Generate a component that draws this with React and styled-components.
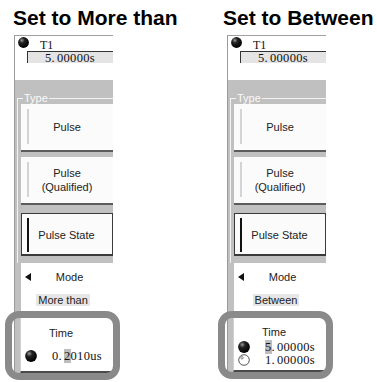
import React from 'react'
import styled, { createGlobalStyle } from 'styled-components'

const GlobalStyle = createGlobalStyle`
  body {
    margin: 0;
    background: #fff;
    font-family: "Liberation Sans", Arial, sans-serif;
  }
`

const Page = styled.div`
  display: flex;
  width: 377px;
  height: 382px;
  overflow: hidden;
`

const Column = styled.div`
  width: ${({ $w }) => $w}px;
  flex-shrink: 0;
  display: flex;
  flex-direction: column;
`

const Title = styled.h2`
  margin: 6px 0 5px ${({ $indent }) => $indent}px;
  font: bold 21px/24px "Liberation Sans", Arial, sans-serif;
  color: #000;
  white-space: nowrap;
`

const Panel = styled.div`
  margin-left: 14px;
  width: 99px;
  box-sizing: border-box;
  border-left: 1px solid #9a9a9a;
  background: #c0c0c0;
  display: flex;
  flex-direction: column;
`

const TopSection = styled.div`
  height: 45px;
  box-sizing: border-box;
  background: #fff;
  border-top: 1px solid #a0a0a0;
  display: flex;
  flex-direction: column;
`

const HeaderRow = styled.div`
  height: 15px;
  display: flex;
  align-items: flex-end;
  padding-left: 3px;
`

const BallSlot = styled.span`
  align-self: flex-start;
  margin-top: 1px;
  display: flex;
`

const Label = styled.span`
  margin-left: 11px;
  font: 12px/12px "Liberation Serif", "Times New Roman", serif;
  color: #111;
`

const InputBox = styled.div`
  margin-left: 12px;
  height: 11px;
  border-top: 1px solid #333;
  border-left: 1px solid #333;
  background: #e4e4e4;
  padding-left: 17px;
  display: flex;
  align-items: center;
`

const Value = styled.span`
  font: 12.5px/12px "Liberation Serif", "Times New Roman", serif;
  letter-spacing: 0.3px;
  color: #111;
  white-space: nowrap;
`

const Dot = styled.span`
  padding-right: 2px;
`

const Cursor = styled.span`
  background: #bdbdbd;
`

const TypeGroup = styled.div`
  position: relative;
  margin: 18px 0 0 2px;
  border-top: 1px solid #f2f2f2;
  border-left: 1px solid #f2f2f2;
  padding: 5px 0 7px 3px;
  display: flex;
  flex-direction: column;
`

const Legend = styled.span`
  position: absolute;
  top: -7px;
  left: 5px;
  padding: 0 1px;
  background: #c0c0c0;
  color: #fafafa;
  font: 11px/12px "Liberation Sans", Arial, sans-serif;
`

const TypeButton = styled.div`
  height: ${({ $h }) => $h}px;
  margin-top: ${({ $gap }) => $gap}px;
  box-sizing: border-box;
  background: #fbfbfb;
  border: ${({ $active }) => ($active ? '1px solid #3a3a3a' : 'none')};
  border-bottom: 2px solid ${({ $active }) => ($active ? '#3a3a3a' : '#5c5c5c')};
  display: flex;
  align-items: stretch;
  padding: ${({ $active }) => ($active ? '4px 0 2px 5px' : '5px 0 6px 6px')};
`

const Bar = styled.span`
  width: 2px;
  background: ${({ $active }) => ($active ? '#111' : '#d4d4d4')};
`

const ButtonText = styled.span`
  flex: 1;
  margin-right: 8px;
  display: flex;
  align-items: center;
  justify-content: center;
  text-align: center;
  font: 11px/14px "Liberation Sans", Arial, sans-serif;
  color: #222;
`

const ModeSection = styled.div`
  margin-left: 6px;
  background: #fff;
  padding: 7px 0 5px;
  display: flex;
  flex-direction: column;
  align-items: center;
`

const ModeHeader = styled.div`
  align-self: stretch;
  height: 14px;
  display: flex;
  align-items: center;
  padding-left: 4px;
`

const ModeLabel = styled.span`
  flex: 1;
  text-align: center;
  margin-right: 5px;
  font: 11px/14px "Liberation Sans", Arial, sans-serif;
  color: #222;
`

const ModeValue = styled.span`
  margin: 10px 8px 0 0;
  padding: 0 2px;
  background: #e6e6e6;
  font: 11px/12px "Liberation Sans", Arial, sans-serif;
  color: #222;
`

const TimeSection = styled.div`
  position: relative;
  margin-left: 5px;
  background: #fff;
  border-left: 1px solid #d0d0d0;
  border-bottom: 2px solid #4a4a4a;
  padding: ${({ $pad }) => $pad};
  display: flex;
  flex-direction: column;
`

const TimeLabel = styled.div`
  height: 14px;
  text-align: center;
  margin-right: 12px;
  font: 11px/14px "Liberation Sans", Arial, sans-serif;
  color: #222;
`

const TimeRow = styled.div`
  height: ${({ $h }) => $h}px;
  margin-top: ${({ $gap }) => $gap}px;
  display: flex;
  align-items: center;
  padding-left: 4px;
  gap: 15px;
`

const Highlight = styled.div`
  position: absolute;
  top: 0;
  left: -16px;
  right: -7px;
  bottom: -9px;
  border: 7px solid #8a8a8a;
  border-radius: 14px;
  pointer-events: none;
`

const Ball = ({ size = 11, id }) => (
  <svg width={size} height={size} viewBox="0 0 12 12">
    <defs>
      <radialGradient id={id} cx="0.35" cy="0.3" r="0.7">
        <stop offset="0" stopColor="#9a9a9a" />
        <stop offset="0.35" stopColor="#222" />
        <stop offset="1" stopColor="#000" />
      </radialGradient>
    </defs>
    <circle cx="6" cy="6" r="5.9" fill={`url(#${id})`} />
  </svg>
)

const HollowBall = () => (
  <svg width="12" height="12" viewBox="0 0 12 12">
    <circle cx="6" cy="6" r="5.3" fill="#fff" stroke="#444" strokeWidth="0.9" />
    <circle cx="4" cy="3.8" r="1.2" fill="none" stroke="#555" strokeWidth="0.7" />
  </svg>
)

const Arrow = () => (
  <svg width="6" height="8" viewBox="0 0 6 8">
    <polygon points="6,0 6,8 0,4" fill="#111" />
  </svg>
)

const TypeList = () => (
  <TypeGroup>
    <Legend>Type</Legend>
    <TypeButton $h={48} $gap={0}>
      <Bar />
      <ButtonText>Pulse</ButtonText>
    </TypeButton>
    <TypeButton $h={48} $gap={5}>
      <Bar />
      <ButtonText>
        Pulse
        <br />
        (Qualified)
      </ButtonText>
    </TypeButton>
    <TypeButton $h={43} $gap={8} $active>
      <Bar $active />
      <ButtonText>Pulse State</ButtonText>
    </TypeButton>
  </TypeGroup>
)

const TriggerPanel = ({ name, mode, children, timePad }) => (
  <Panel>
    <TopSection>
      <HeaderRow>
        <BallSlot>
          <Ball id={`${name}-t1`} />
        </BallSlot>
        <Label>T1</Label>
      </HeaderRow>
      <InputBox>
        <Value>
          5<Dot>.</Dot>00000s
        </Value>
      </InputBox>
    </TopSection>
    <TypeList />
    <ModeSection>
      <ModeHeader>
        <Arrow />
        <ModeLabel>Mode</ModeLabel>
      </ModeHeader>
      <ModeValue>{mode}</ModeValue>
    </ModeSection>
    <TimeSection $pad={timePad}>
      <TimeLabel>Time</TimeLabel>
      {children}
      <Highlight />
    </TimeSection>
  </Panel>
)

export default function App() {
  return (
    <>
      <GlobalStyle />
      <Page>
        <Column $w={213}>
          <Title $indent={13}>Set to More than</Title>
          <TriggerPanel name="more" mode="More than" timePad="15px 0 8px 0">
            <TimeRow $h={14} $gap={9}>
              <Ball size={12} id="more-time" />
              <Value>
                0<Dot>.</Dot>
                <Cursor>2</Cursor>010us
              </Value>
            </TimeRow>
          </TriggerPanel>
        </Column>
        <Column $w={164}>
          <Title $indent={10}>Set to Between</Title>
          <TriggerPanel name="between" mode="Between" timePad="14px 0 4px 0">
            <TimeRow $h={13} $gap={1}>
              <Ball size={12} id="between-t1" />
              <Value>
                <Cursor>5</Cursor>
                <Dot>.</Dot>00000s
              </Value>
            </TimeRow>
            <TimeRow $h={13} $gap={0}>
              <HollowBall />
              <Value>
                1<Dot>.</Dot>00000s
              </Value>
            </TimeRow>
          </TriggerPanel>
        </Column>
      </Page>
    </>
  )
}
